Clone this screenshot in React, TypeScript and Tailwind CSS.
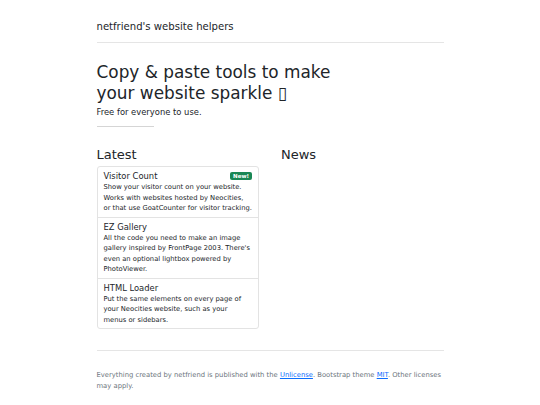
import React from "react";

const items = [
  {
    title: "Visitor Count",
    badge: true,
    text: "Show your visitor count on your website. Works with websites hosted by Neocities, or that use GoatCounter for visitor tracking.",
  },
  {
    title: "EZ Gallery",
    text: "All the code you need to make an image gallery inspired by FrontPage 2003. There's even an optional lightbox powered by PhotoViewer.",
  },
  {
    title: "HTML Loader",
    text: "Put the same elements on every page of your Neocities website, such as your menus or sidebars.",
  },
];

export default function App() {
  return (
    <div
      className="w-[540px] min-h-[405px] bg-white text-[#212529]"
      style={{ fontFamily: '"DejaVu Sans", sans-serif' }}
    >
      <div className="mx-auto w-[347px] pt-[20px]">
        <header className="pb-[8px] border-b border-[#e5e5e5]">
          <div className="text-[10.1px] leading-[14px]">netfriend's website helpers</div>
        </header>
        <div className="pt-[19px]">
          <h1 className="w-[262px] text-[16.9px] leading-[21px] font-normal">
            Copy &amp; paste tools to make your website sparkle ▯
          </h1>
          <p className="mt-[3px] text-[8.4px] leading-[11px]">Free for everyone to use.</p>
          <div className="mt-[8px] w-[57px] border-t border-[#d5d5d5]" />
        </div>
        <div className="mt-[20px] grid grid-cols-2 gap-[22px]">
          <div>
            <h2 className="text-[13px] leading-[16px] font-normal">Latest</h2>
            <div className="mt-[3px] border border-[#e3e3e3] rounded-[3px]">
              {items.map((it, i) => (
                <div
                  key={it.title}
                  className={
                    "px-[6px] pt-[3px] pb-[3px] " + (i > 0 ? "border-t border-[#e3e3e3]" : "")
                  }
                >
                  <div className="flex items-start justify-between">
                    <div className="text-[8.4px] leading-[12px]">{it.title}</div>
                    <span
                      className={
                        it.badge
                          ? "mt-[2px] rounded-[2px] bg-[#198754] px-[3px] text-[5.5px] leading-[8px] font-bold text-white"
                          : "hidden"
                      }
                    >
                      New!
                    </span>
                  </div>
                  <p className="text-[6.75px] leading-[10.5px]">{it.text}</p>
                </div>
              ))}
            </div>
          </div>
          <div>
            <h2 className="text-[13px] leading-[16px] font-normal">News</h2>
          </div>
        </div>
        <footer className="mt-[21px] border-t border-[#e5e5e5] pt-[19px] text-[6.8px] leading-[10.5px] text-[#6c757d]">
          Everything created by netfriend is published with the{" "}
          <a className="text-[#0d6efd] underline">Unlicense</a>. Bootstrap theme{" "}
          <a className="text-[#0d6efd] underline">MIT</a>. Other licenses may apply.
        </footer>
      </div>
    </div>
  );
}
